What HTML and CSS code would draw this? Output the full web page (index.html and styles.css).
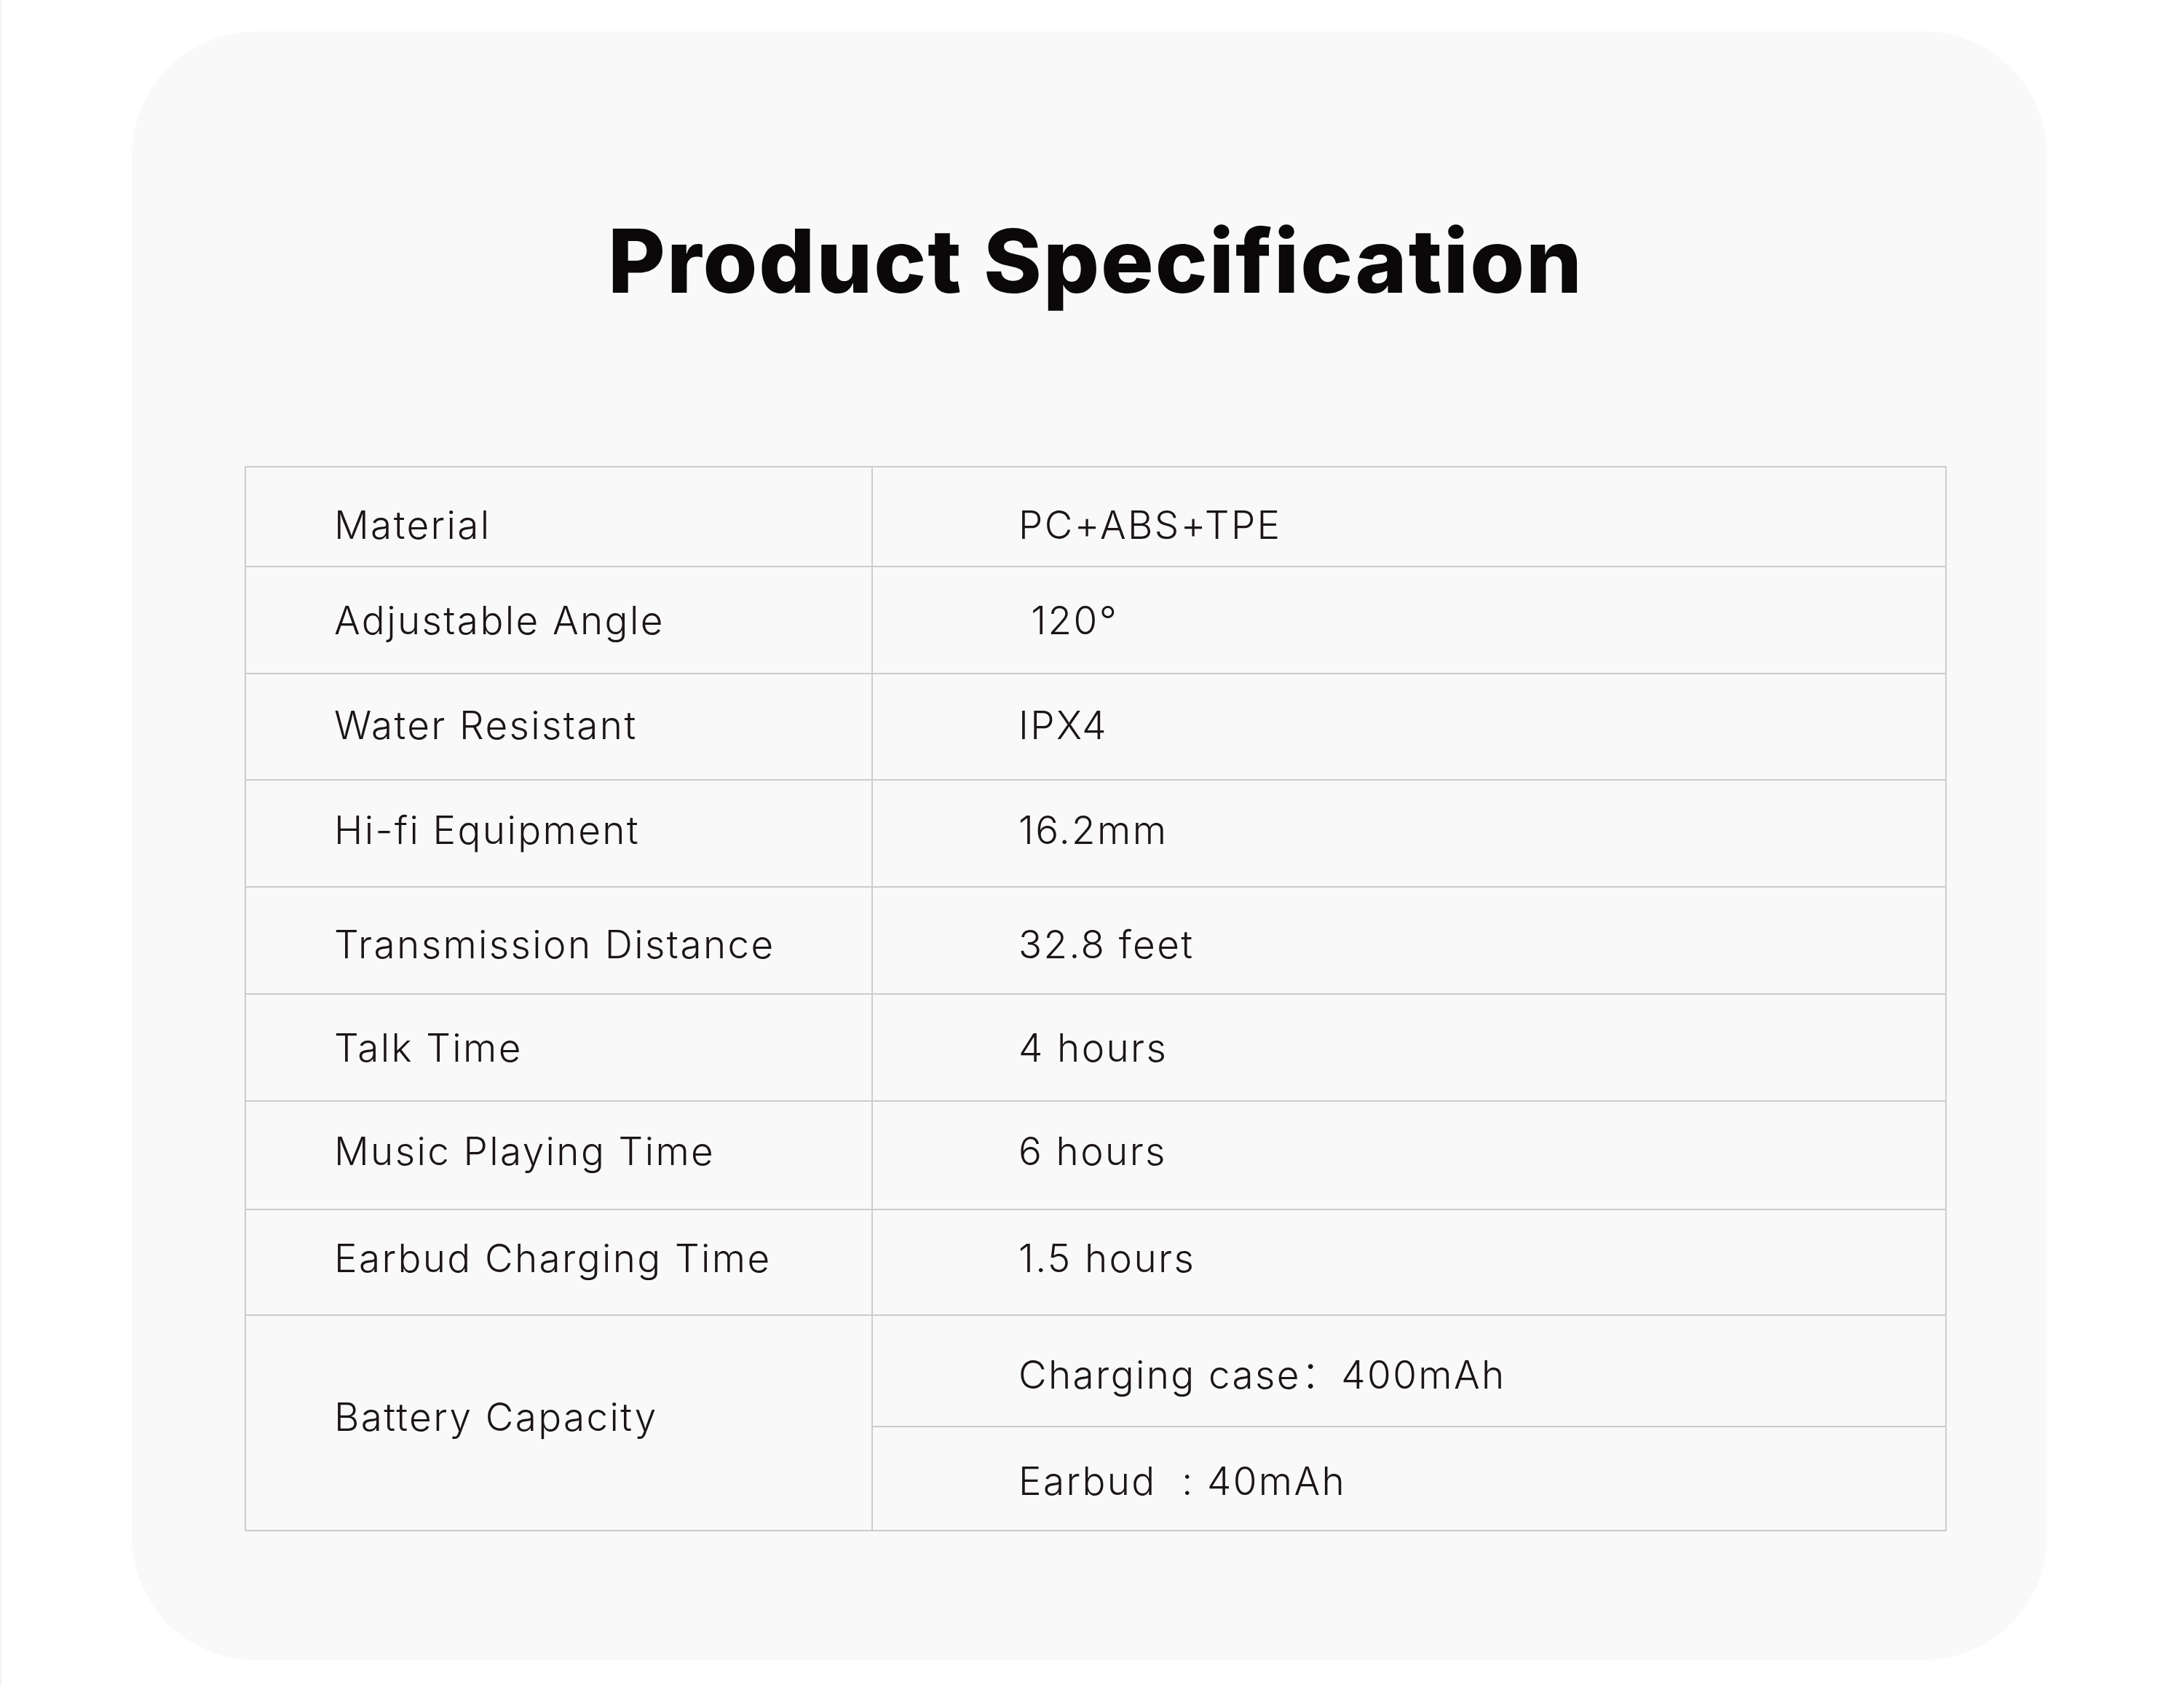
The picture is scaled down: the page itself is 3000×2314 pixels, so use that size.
FILE: index.html
```html
<!DOCTYPE html>
<html lang="en">
<head>
<meta charset="utf-8">
<title>Product Specification</title>
<link rel="stylesheet" href="styles.css">
</head>
<body>
<main class="card">
  <h1 class="title">Product Specification</h1>
  <table class="spec">
    <colgroup><col class="col-label"><col class="col-value"></colgroup>
    <tbody>
      <tr class="r1 down-11"><td class="label">Material</td><td class="value">PC+ABS+TPE</td></tr>
      <tr><td class="label">Adjustable Angle</td><td class="value">&nbsp;120°</td></tr>
      <tr class="up-2"><td class="label">Water Resistant</td><td class="value">IPX4</td></tr>
      <tr class="up-5"><td class="label">Hi-fi Equipment</td><td class="value">16.2mm</td></tr>
      <tr class="down-5"><td class="label">Transmission Distance</td><td class="value">32.8 feet</td></tr>
      <tr><td class="label">Talk Time</td><td class="value">4 hours</td></tr>
      <tr class="up-6 r7"><td class="label">Music Playing Time</td><td class="value">6 hours</td></tr>
      <tr class="up-6 r8"><td class="label">Earbud Charging Time</td><td class="value">1.5 hours</td></tr>
      <tr class="rb1"><td class="label" rowspan="2">Battery Capacity</td><td class="value">Charging case：400mAh</td></tr>
      <tr class="rb2"><td class="value">Earbud&nbsp; : 40mAh</td></tr>
    </tbody>
  </table>
</main>
</body>
</html>
```

FILE: styles.css
```css
html, body {
  margin: 0;
  padding: 0;
  background: #ffffff;
}

body {
  width: 3000px;
  height: 2314px;
  overflow: hidden;
  font-family: Inter, "Noto Sans CJK SC", sans-serif;
  box-shadow: inset 2px 0 0 #f3f3f3;
}

.card {
  box-sizing: border-box;
  width: 2631px;
  height: 2237px;
  margin: 43px 0 0 181px;
  padding: 255px 138px 0 155px;
  background: #f9f9f9;
  border-radius: 170px;
  display: flex;
  flex-direction: column;
  align-items: center;
}

.title {
  margin: 0 0 222px;
  font-family: Inter, sans-serif;
  font-weight: 800;
  font-size: 121px;
  line-height: 120px;
  color: #0a0808;
  letter-spacing: 2px;
}

.spec {
  width: 2338px;
  table-layout: fixed;
  border-collapse: collapse;
  color: #1b1515;
  font-size: 53px;
  font-weight: 300;
  letter-spacing: 2.4px;
}

.col-label { width: 861px; }

.spec td {
  border: 2px solid #d0cbc8;
  height: 145px;
  padding: 0;
  vertical-align: middle;
  white-space: nowrap;
}

.spec .label { padding-left: 121px; }
.spec .value { padding-left: 200px; }

/* row heights (cell height excludes the nudge padding) */
.spec .r1 td { height: 113px; padding-top: 22px; }
.spec .up-2 td { height: 140px; padding-bottom: 4px; }
.spec .up-5 td { height: 135px; padding-bottom: 10px; }
.spec .down-5 td { height: 135px; padding-top: 10px; }
.spec .up-6 td { height: 133px; padding-bottom: 12px; }
.spec .r7 td { height: 135px; }
.spec .r8 td { height: 131px; }
.spec .rb1 .value { height: 149px; padding-top: 2px; }
.spec .rb2 .value { height: 135px; padding-top: 6px; }
.spec .rb1 .label { height: auto; padding-bottom: 16px; }
```
